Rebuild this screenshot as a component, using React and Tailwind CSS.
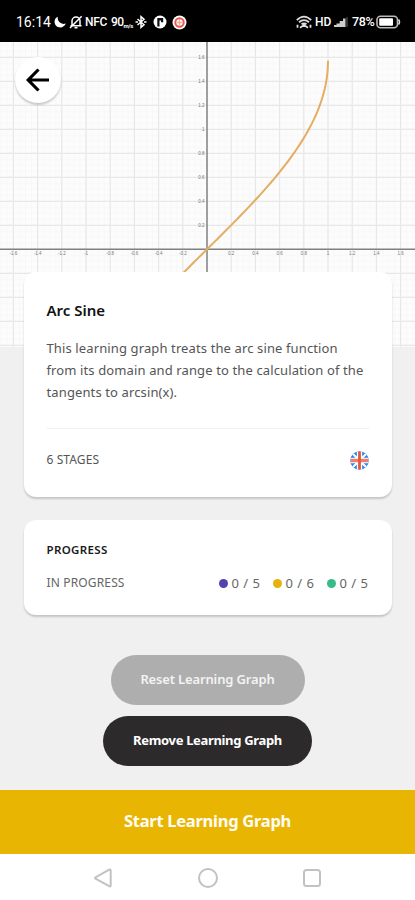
import React from "react";

const UNIT_X = 121;
const UNIT_Y = 120;
const ORIGIN = { x: 207, y: 207.3 };

const minorX = Array.from({ length: 69 }, (_, i) => ORIGIN.x + ((i - 34) * UNIT_X) / 20);
const minorY = Array.from({ length: 51 }, (_, i) => ORIGIN.y + ((i - 34) * UNIT_Y) / 20);
const xTicks = [-8, -7, -6, -5, -4, -3, -2, -1, 1, 2, 3, 4, 5, 6, 7, 8];
const yTicks = [8, 7, 6, 5, 4, 3, 2, 1];
const gridRows = [8, 7, 6, 5, 4, 3, 2, 1, -1, -2, -3, -4];

const curve = Array.from({ length: 61 }, (_, i) => {
  const t = -0.4 + (i / 60) * (Math.PI / 2 + 0.4);
  return `${(ORIGIN.x + UNIT_X * Math.sin(t)).toFixed(2)},${(ORIGIN.y - UNIT_Y * t).toFixed(2)}`;
}).join(" ");

const counters = [
  { color: "bg-[#5243ae]", label: "0 / 5" },
  { color: "bg-[#e6b30c]", label: "0 / 6" },
  { color: "bg-[#36bc88]", label: "0 / 5" },
];

function StatusBar() {
  return (
    <div className="flex h-[42px] shrink-0 items-center justify-between bg-black pt-[2px] pr-[14px] pl-4 font-['Roboto',sans-serif] text-white">
      <div className="flex items-center">
        <span className="w-[38px] text-[14px] leading-none">16:14</span>
        <svg width="12" height="12" viewBox="0 0 12 12">
          <path d="M3.600.7A5.700 5.700 0 1 0 11.700 7.400Q9 8.600 6.300 6.800T3.600.7Z" fill="#fff" />
        </svg>
        <svg className="ml-[3px]" width="14" height="14" viewBox="0 0 14 14" fill="none" stroke="#fff" strokeWidth="1.500">
          <path d="M3 10.500V6a4 4 0 0 1 8 0v4.500M1.500 10.700h11M5.500 12.700h3M1 13 12.700 1.300" />
        </svg>
        <span className="ml-[2px] w-[26px] text-[12px] leading-none font-medium tracking-[-0.3px]">NFC</span>
        <span className="text-[12px] leading-none font-medium tracking-[-0.6px]">90</span>
        <span className="w-[12px] self-end text-[6px] leading-[8px] font-bold tracking-[-0.3px]">m/s</span>
        <svg width="12" height="14" viewBox="0 0 12 14" fill="none" stroke="#fff" strokeWidth="1.500">
          <path d="M2.500 4 9 9.700 6 12.300V1.700L9 4.300 2.500 10" />
          <path d="M.5 7H3M9 7h2.500" />
        </svg>
        <svg className="ml-[6px]" width="14" height="14" viewBox="0 0 14 14">
          <circle cx="7" cy="7" r="6.500" fill="#fff" />
          <path d="M4.300 3h5.900v4.300H8V5.500H6.500v6H4.300Z" fill="#111" />
        </svg>
        <svg className="ml-[5px]" width="15" height="15" viewBox="0 0 15 15">
          <circle cx="7.500" cy="7.500" r="7" fill="#fff" />
          <circle cx="7.500" cy="7.500" r="4.200" fill="none" stroke="#e8584c" strokeWidth="2" />
          <path d="M7.500 4.500v6M4.500 7.500h6" stroke="#f4aaa3" strokeWidth="1.400" />
        </svg>
      </div>
      <div className="flex items-center">
        <svg width="16" height="14" viewBox="0 0 16 14" fill="none" stroke="#ddd" strokeWidth="1.800">
          <path d="M.8 5.200Q8-2 15.200 5.200M3 7.300Q8 3 13 7.300M5.500 9.300Q8 7.500 10.500 9.300M1.500 12.800v-3M4 12.800 8 10l4 2.800M14.500 12.800v-3" />
        </svg>
        <span className="ml-[3px] w-[19px] text-[12px] leading-none font-medium">HD</span>
        <svg width="15" height="12" viewBox="0 0 15 12">
          <path d="M0 11V9h2.500v2ZM2.500 11V7.500h3.200V11ZM5.700 11V5H9v6ZM9 11V2.500h2.500V11Z" fill="#ccc" />
          <path d="M12.200 11V1h1.500v10Z" fill="#444" />
        </svg>
        <span className="ml-[3px] w-[24px] text-[12.500px] leading-none font-medium tracking-[-0.4px]">78%</span>
        <svg width="25" height="14" viewBox="0 0 25 14">
          <rect x="1" y="1.200" width="20.500" height="11.600" rx="3.500" fill="none" stroke="#bbb" strokeWidth="1.600" />
          <rect x="3.200" y="3.200" width="13.800" height="7.600" rx="1" fill="#fff" />
          <path d="M22.500 4.500q2 2.500 0 5" fill="none" stroke="#ddd" strokeWidth="1.500" />
        </svg>
      </div>
    </div>
  );
}

function FunctionPlot() {
  return (
    <svg className="block" width="415" height="305" viewBox="0 0 415 305">
      <rect width="415" height="305" fill="#fcfcfc" />
      <g stroke="#f8f8f8" strokeWidth="1">
        {minorX.map((x) => <line key={x} x1={x} x2={x} y1="0" y2="305" />)}
        {minorY.map((y) => <line key={y} x1="0" x2="415" y1={y} y2={y} />)}
      </g>
      <g stroke="#e8e8e8" strokeWidth="1.200">
        {xTicks.map((n) => {
          const x = ORIGIN.x + (n * UNIT_X) / 5;
          return <line key={n} x1={x} x2={x} y1="0" y2="305" />;
        })}
        {gridRows.map((n) => {
          const y = ORIGIN.y - (n * UNIT_Y) / 5;
          return <line key={n} x1="0" x2="415" y1={y} y2={y} />;
        })}
      </g>
      <g stroke="#808080" strokeWidth="1.500">
        <line x1="0" x2="415" y1={ORIGIN.y} y2={ORIGIN.y} />
        <line x1={ORIGIN.x} x2={ORIGIN.x} y1="0" y2="305" />
      </g>
      <polyline points={curve} fill="none" stroke="#e5ad62" strokeWidth="2" />
      <g className="font-['Liberation_Sans',sans-serif] text-[4.500px]" fill="#777">
        {xTicks.map((n) => (
          <text key={n} x={ORIGIN.x + (n * UNIT_X) / 5} y={ORIGIN.y + 6} textAnchor="middle">{n / 5}</text>
        ))}
        {yTicks.map((n) => (
          <text key={n} x={ORIGIN.x - 2.500} y={ORIGIN.y + 1.600 - (n * UNIT_Y) / 5} textAnchor="end">{n / 5}</text>
        ))}
      </g>
    </svg>
  );
}

function BritishFlag() {
  return (
    <svg width="19" height="19" viewBox="0 0 19 19">
      <defs>
        <clipPath id="flag-disc">
          <circle cx="9.500" cy="9.500" r="9.300" />
        </clipPath>
      </defs>
      <g clipPath="url(#flag-disc)">
        <path d="M0 0h19v19H0Z" fill="#2584ee" />
        <path d="M0 0 19 19M19 0 0 19" stroke="#fff" strokeWidth="2" />
        <path d="M9.500 0v19M0 9.500h19" stroke="#fff" strokeWidth="5.400" />
        <path d="M0 9.500h19" stroke="#ee7f6c" strokeWidth="3.400" />
        <path d="M9.500 0v19" stroke="#e2553f" strokeWidth="2.800" />
      </g>
    </svg>
  );
}

export default function App() {
  return (
    <div className="flex h-[900px] w-[415px] flex-col overflow-hidden bg-[#f0f0f0] font-['Noto_Sans',sans-serif] whitespace-nowrap">
      <StatusBar />

      <div className="relative h-[305px] shrink-0">
        <FunctionPlot />
        <button className="absolute top-[15px] left-[15px] flex h-[46px] w-[46px] items-center justify-center rounded-full bg-white shadow-[0_2px_2px_rgba(0,0,0,0.2)]">
          <svg width="24" height="24" viewBox="0 0 24 24" fill="none" stroke="#000" strokeWidth="3.200">
            <path d="M23 12H2.500M12.500 1.500 2.200 12l10.300 10.500" />
          </svg>
        </button>
      </div>

      <div className="relative mx-[23.500px] -mt-[75px] h-[224.500px] shrink-0 rounded-[12px] bg-white px-[23px] pt-[28px] shadow-[0_2px_2px_rgba(0,0,0,0.18)]">
        <h1 className="text-[15px] leading-5 font-semibold text-[#111]">Arc Sine</h1>
        <p className="mt-[17px] text-[13px] leading-[22px] tracking-[0.12px] text-[#555]">
          <span className="block">This learning graph treats the arc sine function</span>
          <span className="block">from its domain and range to the calculation of the</span>
          <span className="block">tangents to arcsin(x).</span>
        </p>
        <div className="mt-[25px] h-px bg-[#f0f0f0]" />
        <div className="mt-[21px] flex items-center justify-between">
          <span className="text-[12px] leading-5 tracking-[0.1px] text-[#555]">6 STAGES</span>
          <BritishFlag />
        </div>
      </div>

      <div className="mx-[23.500px] mt-[23.500px] h-[95px] shrink-0 rounded-[12px] bg-white px-[23px] pt-5 shadow-[0_2px_2px_rgba(0,0,0,0.18)]">
        <h2 className="text-[11.500px] leading-5 font-semibold tracking-[0.35px] text-[#1a1a1a]">PROGRESS</h2>
        <div className="mt-[13px] flex items-center justify-between text-[#666]">
          <span className="text-[12px] leading-5 tracking-[0.15px]">IN PROGRESS</span>
          <div className="flex gap-[12px]">
            {counters.map(({ color, label }, i) => (
              <div key={i} className="flex items-center gap-[4px]">
                <span className={`h-[9px] w-[9px] rounded-full ${color}`} />
                <span className="w-[29px] text-[13px] leading-5 tracking-[0.5px]">{label}</span>
              </div>
            ))}
          </div>
        </div>
      </div>

      <div className="mt-[40px] flex shrink-0 flex-col items-center gap-[11px]">
        <button className="h-[50px] w-[194px] rounded-full bg-[#afaeae] text-[13px] font-semibold tracking-[-0.15px] text-[#f3f3f3]">
          Reset Learning Graph
        </button>
        <button className="h-[50px] w-[209px] rounded-full bg-[#2d2a2b] text-[13px] font-bold tracking-[-0.33px] text-white">
          Remove Learning Graph
        </button>
      </div>

      <button className="mt-[23.500px] h-[64px] shrink-0 bg-[#e9b503] text-[16.500px] font-bold tracking-[-0.27px] text-[#fffdf5]">
        Start Learning Graph
      </button>

      <div className="flex flex-1 items-center justify-between bg-white pt-[2px] pr-[94.500px] pl-[93.500px]">
        <svg width="19" height="20" viewBox="0 0 19 20" fill="none" stroke="#c2c2c2" strokeWidth="2" strokeLinejoin="round">
          <path d="M1.500 9.300 15.200 1.700q1.500-.7 1.500 1v14.500q0 1.700-1.500 1L1.500 10.600q-1-.7 0-1.300Z" />
        </svg>
        <svg width="20" height="20" viewBox="0 0 20 20" fill="none" stroke="#c2c2c2" strokeWidth="2">
          <circle cx="10" cy="10" r="9" />
        </svg>
        <svg width="18" height="18" viewBox="0 0 18 18" fill="none" stroke="#c2c2c2" strokeWidth="2">
          <rect x="1" y="1" width="16" height="16" rx="2.500" />
        </svg>
      </div>
    </div>
  );
}
